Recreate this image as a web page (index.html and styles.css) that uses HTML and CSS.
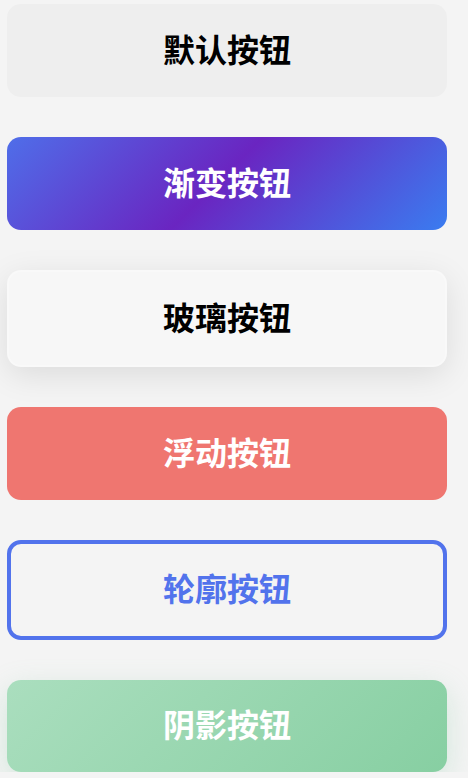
FILE: index.html
```html
<!DOCTYPE html>
<html lang="zh">
<head>
    <meta charset="UTF-8">
    <title>按钮样式</title>
    <link rel="stylesheet" href="styles.css">
</head>
<body>
<div class="btnList">
    <button class="btn btnDefault">默认按钮</button>
    <button class="btn btnGradient">渐变按钮</button>
    <button class="btn btnGlass">玻璃按钮</button>
    <button class="btn btnFloat">浮动按钮</button>
    <button class="btn btnOutline">轮廓按钮</button>
    <button class="btn btnShadow">阴影按钮</button>
</div>
</body>
</html>
```

FILE: styles.css
```css
body{
    margin: 0;
    background-color: #f4f4f4;
    font-family: "Noto Sans CJK SC", "Noto Sans", sans-serif;
}
.btnList{
    display: flex;
    flex-direction: column;
    gap: 40px;
    width: 440px;
    margin: 4px 0 0 7px;
}
.btn{
    box-sizing: border-box;
    height: 93px;
    border: 0;
    border-radius: 14px;
    font-family: "Noto Sans CJK SC", "Noto Sans", sans-serif;
    font-size: 32px;
    font-weight: 700;
    color: #000;
    padding: 0 0 6px 0;
}
.btnDefault{
    background-color: #eeeeee;
}
.btnGradient{
    background: linear-gradient(135deg, #4f6ee9 0%, #6a25c1 48%, #3a7cf0 100%);
    color: #fff;
}
.btnGlass{
    height: 97px;
    background-color: #f7f7f7;
    border: 2px solid rgba(255, 255, 255, 0.3);
    box-shadow: 0 8px 32px rgba(0, 0, 0, 0.1);
}
.btnFloat{
    background-color: #ef7670;
    color: #fff;
}
.btnOutline{
    height: 100px;
    background-color: transparent;
    border: 4px solid #5273ec;
    color: #5273ec;
}
.btnShadow{
    height: 92px;
    background: linear-gradient(135deg, #aadebe 0%, #87cfa2 100%);
    color: #fff;
    box-shadow: 0 10px 30px rgba(130, 200, 160, 0.3);
}
```
